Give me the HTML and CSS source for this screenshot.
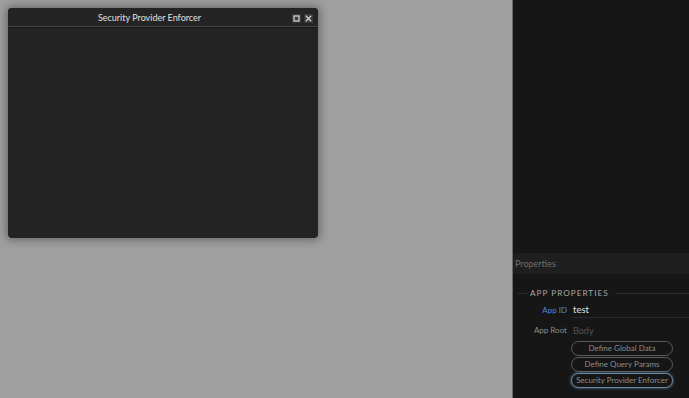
FILE: index.html
```html
<!DOCTYPE html>
<html lang="en">
<head>
  <meta charset="UTF-8" />
  <title>App Designer</title>
  <link rel="stylesheet" href="styles.css">
</head>
<body>
  <div class="stage">
    <div class="window">
      <div class="window-title">
        <span class="title-text">Security Provider Enforcer</span>
        <span class="wbtn"><svg width="9" height="9" viewBox="0 0 9 9"><rect x="2" y="2" width="5" height="5" fill="none" stroke="#d0d0d0" stroke-width="1.3"/></svg></span>
        <span class="wbtn"><svg width="9" height="9" viewBox="0 0 9 9"><path d="M1.8 1.8 L7.2 7.2 M7.2 1.8 L1.8 7.2" stroke="#d0d0d0" stroke-width="1.3"/></svg></span>
      </div>
      <div class="window-body"></div>
    </div>
  </div>

  <div class="side">
    <div class="side-top"></div>
    <div class="props-head">Properties</div>
    <div class="props">
      <div class="section"><span>App Properties</span></div>
      <div class="row first">
        <label class="active">App ID</label>
        <div class="value">test</div>
      </div>
      <div class="row">
        <label>App Root</label>
        <div class="value muted">Body</div>
      </div>
      <div class="actions">
        <button>Define Global Data</button>
        <button>Define Query Params</button>
        <button class="focus">Security Provider Enforcer</button>
      </div>
    </div>
  </div>
</body>
</html>
```

FILE: styles.css
```css
html, body {
  margin: 0;
  height: 100%;
}
body {
  display: flex;
  background: #9f9f9f;
  font-family: Lato, "Open Sans", sans-serif;
  overflow: hidden;
}
.stage {
  flex: 1;
  padding: 8px;
}
.window {
  width: 310px;
  height: 230px;
  background: #232323;
  border-radius: 4px;
  box-shadow: 0 0 8px 2px rgba(0, 0, 0, 0.35);
  display: flex;
  flex-direction: column;
  overflow: hidden;
}
.window-title {
  height: 18px;
  display: flex;
  align-items: center;
  gap: 3px;
  padding-right: 5px;
  color: #e0e0e0;
  font-size: 9px;
  border-bottom: 1px solid #444;
  background: #242424;
}
.title-text {
  flex: 1;
  text-align: center;
  padding-top: 1px;
  padding-left: 2px;
}
.wbtn {
  width: 9px;
  height: 9px;
  background: #3a3a3a;
  display: flex;
  align-items: center;
  justify-content: center;
  margin-top: 2px;
}
.window-body {
  flex: 1;
  border-top: 1px solid #1a1a1a;
}
.side {
  width: 176px;
  background: #161616;
  border-left: 1px solid #6a6a6a;
  display: flex;
  flex-direction: column;
}
.side-top {
  height: 253px;
}
.props-head {
  height: 21px;
  line-height: 21px;
  background: #1f1f1f;
  color: #6e6e6e;
  font-size: 9px;
  padding-left: 2px;
}
.props {
  padding-top: 13px;
}
.section {
  height: 12px;
  display: flex;
  align-items: center;
  gap: 3px;
  padding-left: 5px;
  color: #a8a8a8;
  font-size: 8.2px;
  letter-spacing: 1px;
  text-transform: uppercase;
}
.section::before,
.section::after {
  content: "";
  height: 1px;
  background: #2c2c2c;
}
.section::before {
  width: 9px;
}
.section::after {
  flex: 1;
  margin-left: 3px;
}
.row {
  display: flex;
  align-items: center;
  height: 16px;
  margin-top: 4px;
  font-size: 8px;
}
.row.first {
  margin-top: 3px;
}
.row label {
  width: 54px;
  text-align: right;
  padding-right: 4px;
  color: #8c8c8c;
}
.row label.active {
  color: #4f86d4;
}
.value {
  flex: 1;
  height: 15px;
  line-height: 15px;
  padding-left: 2px;
  color: #e0e0e0;
  font-size: 9.5px;
  border-bottom: 1px solid #2a2a2a;
}
.value.muted {
  color: #555;
  font-size: 9px;
  border-bottom: none;
}
.actions {
  display: flex;
  flex-direction: column;
  gap: 1px;
  padding-left: 58px;
  margin-top: 3px;
}
button {
  width: 102px;
  height: 15px;
  padding: 0;
  border: 1px solid #5c5c5c;
  border-radius: 8px;
  background: #161616;
  color: #8c8c8c;
  font-family: inherit;
  font-size: 8px;
  line-height: 13px;
}
button.focus {
  border-color: #6f8798;
  box-shadow: 0 0 2px 1px rgba(90, 140, 180, 0.5);
}
```
